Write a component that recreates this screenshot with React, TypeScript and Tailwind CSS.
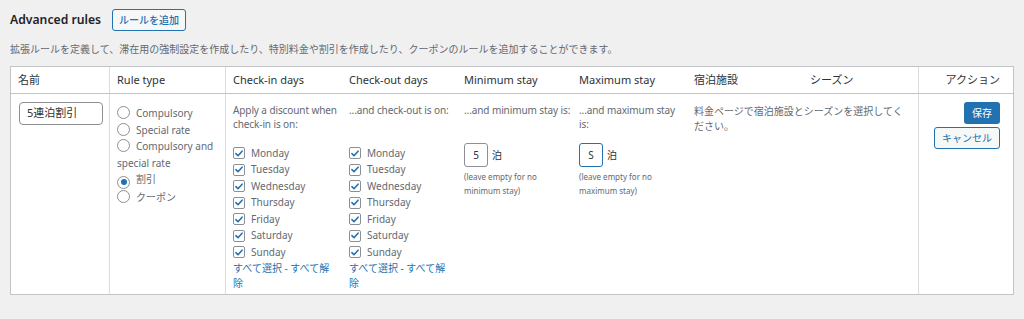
import { FC, ReactNode } from "react";

const days = ["Monday", "Tuesday", "Wednesday", "Thursday", "Friday", "Saturday", "Sunday"];

const Check: FC = () => (
  <span className="inline-flex items-center justify-center w-[12px] h-[12px] border border-[#8c8f94] rounded-[2px] bg-white shrink-0">
    <svg viewBox="0 0 12 12" className="w-[11px] h-[11px]">
      <path d="M2.3 6.2 L4.8 8.7 L9.7 3.2" fill="none" stroke="#2271b1" strokeWidth="1.9" strokeLinecap="round" strokeLinejoin="round" />
    </svg>
  </span>
);

const Radio: FC<{ checked?: boolean }> = ({ checked }) => (
  <span className="inline-flex items-center justify-center w-[13px] h-[13px] border border-[#8c8f94] rounded-full bg-white align-[-2px] mr-[6px]">
    {checked && <span className="w-[6px] h-[6px] rounded-full bg-[#2271b1]" />}
  </span>
);

const DayList: FC<{ intro: ReactNode }> = ({ intro }) => (
  <div>
    <p className="leading-[13.5px] h-[27px] mb-[14px] whitespace-nowrap tracking-[-0.1px]">{intro}</p>
    <ul>
      {days.map((d) => (
        <li key={d} className="flex items-center gap-[6px] h-[16.5px]">
          <Check />
          <span>{d}</span>
        </li>
      ))}
    </ul>
    <p className="text-[#2271b1] leading-[15px]">すべて選択 - すべて解除</p>
  </div>
);

const Stay: FC<{ intro: ReactNode; value: string; note: string; focused?: boolean }> = ({ intro, value, note, focused }) => (
  <div>
    <p className="leading-[13.5px] h-[27px] mb-[12px] whitespace-nowrap tracking-[-0.1px]">{intro}</p>
    <div className="flex items-center gap-[4px]">
      <span
        className={
          focused
            ? "w-[24px] h-[24px] rounded-[3px] border-[1.5px] border-[#2271b1] bg-white flex items-center justify-center text-[#2c3338]"
            : "w-[24px] h-[24px] rounded-[3px] border border-[#8c8f94] bg-white flex items-center justify-center text-[#2c3338]"
        }
      >
        {value}
      </span>
      <span className="text-[#2c3338]">泊</span>
    </div>
    <p className="text-[8px] leading-[14px] mt-[3px]">(leave empty for no {note}</p>
  </div>
);

const App: FC = () => {
  return (
    <div
      className="w-[1024px] h-[319px] bg-[#f0f0f1] text-[#646970] text-[10px] px-[10px] pt-[9px]"
      style={{ fontFamily: '"Noto Sans", "Noto Sans CJK JP", sans-serif' }}
    >
      {/* Title */}
      <div className="flex items-center gap-[11px] h-[22px]">
        <h2 className="text-[12.2px] font-semibold text-[#1d2327]">Advanced rules</h2>
        <button className="h-[22px] px-[6px] text-[10px] font-medium text-[#2271b1] border border-[#2271b1] rounded-[3px] bg-[#f6f7f7]">
          ルールを追加
        </button>
      </div>
      <p className="mt-[10px] leading-[16px]">
        拡張ルールを定義して、滞在用の強制設定を作成したり、特別料金や割引を作成したり、クーポンのルールを追加することができます。
      </p>

      {/* Table */}
      <div className="mt-[9px] w-[1004px] h-[229px] border border-[#c3c4c7] bg-white flex flex-col">
        <div className="grid grid-cols-[99px_116px_116px_115px_115px_115px_116px_116px_95px] h-[27px] border-b border-[#c3c4c7] text-[11px] text-[#2c3338] items-stretch">
          <div className="border-r border-[#dcdcde] px-[7px] flex items-center">名前</div>
          <div className="border-r border-[#dcdcde] px-[7px] flex items-center">Rule type</div>
          <div className="px-[7px] flex items-center">Check-in days</div>
          <div className="px-[7px] flex items-center">Check-out days</div>
          <div className="px-[7px] flex items-center">Minimum stay</div>
          <div className="px-[7px] flex items-center">Maximum stay</div>
          <div className="px-[7px] flex items-center">宿泊施設</div>
          <div className="border-r border-[#dcdcde] px-[7px] flex items-center">シーズン</div>
          <div className="px-[14px] flex items-center justify-end">アクション</div>
        </div>

        <div className="grid grid-cols-[99px_116px_116px_115px_115px_115px_232px_95px] flex-1">
          <div className="border-r border-[#dcdcde] pl-[8px] pt-[8px]">
            <div className="w-[84px] h-[23px] border border-[#8c8f94] rounded-[4px] flex items-center px-[7px] text-[11px] text-[#2c3338]">
              5連泊割引
            </div>
          </div>
          <div className="border-r border-[#dcdcde] pl-[7px] pt-[11px] leading-[16.5px]">
            <div><Radio />Compulsory</div>
            <div><Radio />Special rate</div>
            <div><Radio />Compulsory and special rate</div>
            <div><Radio checked />割引</div>
            <div><Radio />クーポン</div>
          </div>
          <div className="px-[7px] pt-[10px]">
            <DayList intro={<>Apply a discount when<br />check-in is on:</>} />
          </div>
          <div className="px-[7px] pt-[10px]">
            <DayList intro="...and check-out is on:" />
          </div>
          <div className="px-[7px] pt-[10px]">
            <Stay intro="...and minimum stay is:" value="5" note="minimum stay)" />
          </div>
          <div className="px-[7px] pt-[10px]">
            <Stay intro={<>...and maximum stay<br />is:</>} value="S" note="maximum stay)" focused />
          </div>
          <div className="border-r border-[#dcdcde] px-[7px] pt-[10px] leading-[15px]">
            料金ページで宿泊施設とシーズンを選択してください。
          </div>
          <div className="pr-[14px] pt-[8px] flex flex-col items-end gap-[3px]">
            <button className="h-[22px] px-[8px] rounded-[3px] bg-[#2271b1] text-white text-[10px]">保存</button>
            <button className="h-[22px] px-[7px] rounded-[3px] border border-[#2271b1] bg-[#f6f7f7] text-[#2271b1] text-[10px]">
              キャンセル
            </button>
          </div>
        </div>
      </div>
    </div>
  );
};

export default App;
